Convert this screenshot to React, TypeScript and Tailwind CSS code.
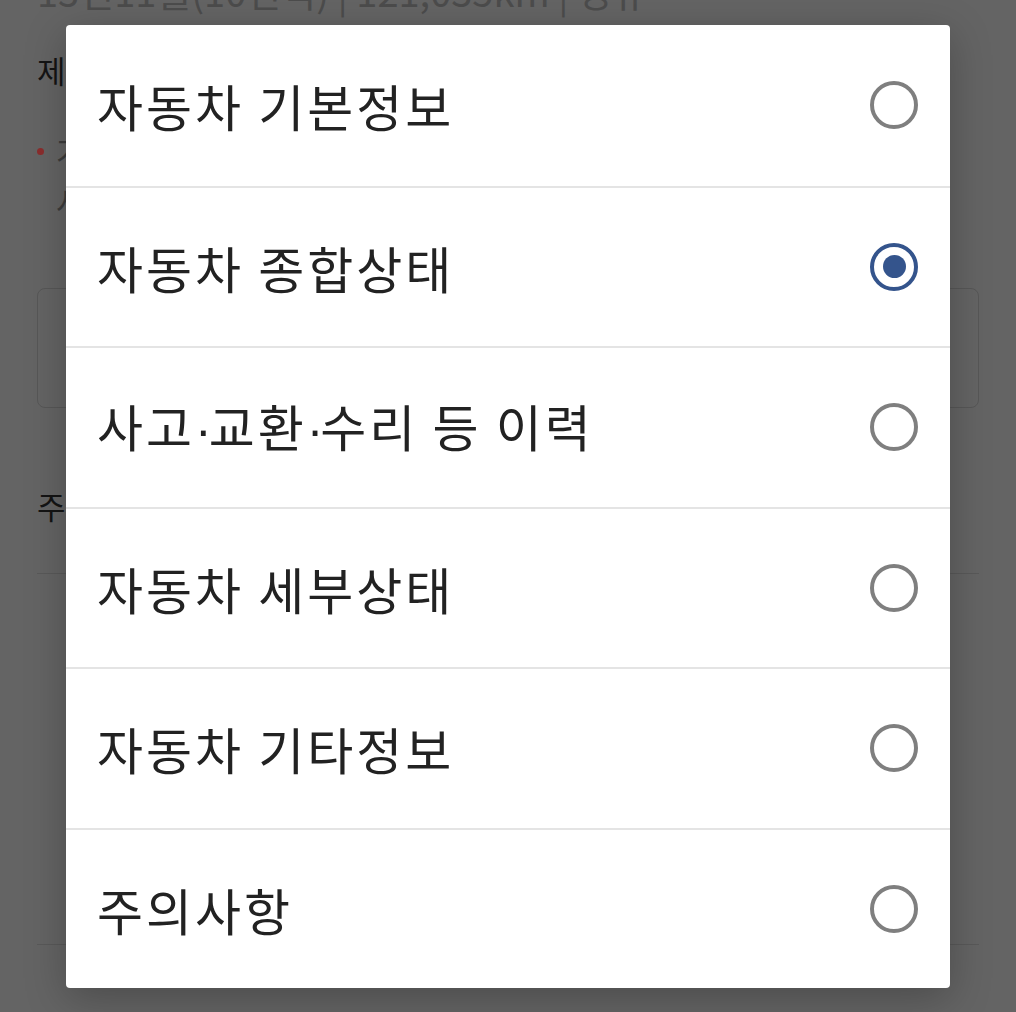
import { useState } from "react";

const options = [
  "자동차 기본정보",
  "자동차 종합상태",
  "사고·교환·수리 등 이력",
  "자동차 세부상태",
  "자동차 기타정보",
  "주의사항",
];

// the dialog font draws "·" full width; the reference shows a narrow dot
function Label({ text }: { text: string }) {
  const parts = text.split("·");
  return (
    <span className="text-[50px] leading-none tracking-[3px] text-[#222]">
      {parts.map((p, i) => (
        <span key={i}>
          {i > 0 && (
            <span style={{ fontFamily: '"Liberation Sans", sans-serif' }} className="tracking-[-3px]">
              ·
            </span>
          )}
          {p}
        </span>
      ))}
    </span>
  );
}

function Radio({ checked }: { checked: boolean }) {
  return checked ? (
    <span className="grid h-[48px] w-[48px] place-items-center rounded-full border-[4px] border-[#34548c]">
      <span className="h-[23px] w-[23px] rounded-full bg-[#34548c]" />
    </span>
  ) : (
    <span className="h-[48px] w-[48px] rounded-full border-[4px] border-[#7f7f7f]" />
  );
}

export default function App() {
  const [selected, setSelected] = useState(1);

  return (
    <div
      className="relative h-[1012px] w-[1016px] overflow-hidden bg-[#646464]"
      style={{ fontFamily: '"Noto Sans CJK KR", "Noto Sans", sans-serif' }}
    >
      {/* page underneath the dim layer */}
      <div className="px-[37px]">
        <p className="mt-[-33px] text-[38px] leading-[48px] text-[#4c4c4c]">
          13년11월(10연식) | 121,035km | 경유
        </p>
        <h2 className="mt-[35px] text-[31px] leading-[40px] text-[#141414]">제시 정보</h2>
        <ul className="mt-[36px] flex flex-col text-[31px] leading-[50px] text-[#3c3c3c]">
          <li className="flex items-center gap-[12px]">
            <span className="h-[7px] w-[7px] rounded-full bg-[#8a2d2d]" />
            가격 정보
          </li>
          <li className="pl-[19px]">사고 이력</li>
        </ul>
        <div className="mt-[62px] h-[120px] rounded-[8px] border border-[#575757]" />
        <h2 className="mt-[78px] text-[31px] leading-[40px] text-[#141414]">주의사항</h2>
        <div className="mt-[47px] h-px bg-[#595959]" />
        <div className="mt-[370px] h-px bg-[#595959]" />
      </div>

      {/* dialog */}
      <div className="absolute left-[66px] top-[25px] w-[884px] overflow-hidden rounded-[4px] bg-white shadow-[0_10px_40px_rgba(0,0,0,0.25)]">
        {options.map((label, i) => (
          <button
            key={label}
            onClick={() => setSelected(i)}
            className={
              "flex h-[160.5px] w-full items-center justify-between pl-[31px] pr-[32px] text-left " +
              (i > 0 ? "border-t-2 border-[#e4e4e4]" : "")
            }
          >
            <Label text={label} />
            <Radio checked={selected === i} />
          </button>
        ))}
      </div>
    </div>
  );
}
